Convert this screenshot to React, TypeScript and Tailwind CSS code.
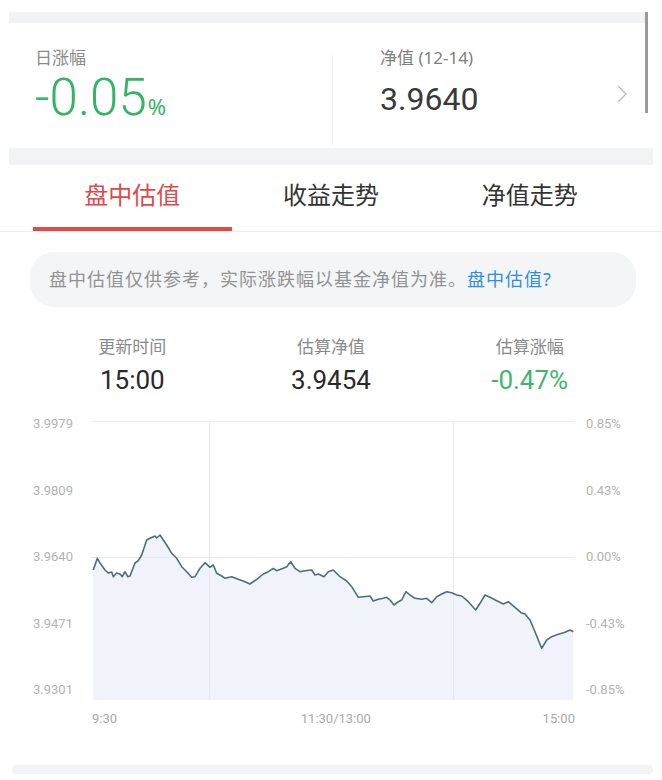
import React from 'react'

const sans = { fontFamily: '"Noto Sans", "Noto Sans CJK SC", sans-serif' }

// line of the intraday estimate, in page pixels (viewBox matches the plot box)
const pts: [number, number][] = [
  [93.3, 570], [97.3, 558.3], [100, 563], [105, 570], [108.3, 573], [111.7, 572], [113.3, 576.7], [116.7, 573],
  [120, 574], [122.3, 576.7], [125, 571.7], [127.7, 576.7], [130, 576], [135, 563], [138.3, 560.7], [141.7, 555],
  [146.7, 540], [150, 538.3], [155, 536], [156.7, 538], [160, 535], [163.3, 540], [166.7, 545], [171.7, 553.3],
  [176.7, 558.3], [181.7, 566.7], [186.7, 571.7], [191.7, 577.3], [195, 576.7], [200, 568.3], [205, 562.7],
  [210, 567.3], [213.3, 565], [216.7, 573.3], [221.7, 576], [225, 578.3], [231.7, 576.7], [238.3, 579.3],
  [245, 581.7], [250, 584], [256.7, 579.3], [263.3, 574], [268.3, 571.7], [273.3, 568.3], [276.7, 570.7],
  [283.3, 568.3], [286.7, 566.7], [290.7, 561.7], [295, 568.3], [300, 571.7], [305, 570.7], [311.7, 570],
  [315, 575], [318.3, 574], [324, 576.7], [328.3, 571.7], [333.3, 570], [340, 576.7], [346.7, 581], [351.7, 586.7],
  [358.3, 597.3], [363.3, 596.7], [370, 596], [373.3, 601], [378.3, 599.3], [383.3, 598.3], [386.7, 597.3],
  [390, 600], [394, 605], [398.3, 601.7], [401.7, 600], [406, 591.7], [410, 595], [415, 598.3], [421.7, 599.3],
  [426.7, 598.3], [431.7, 602.7], [436.7, 596.7], [441.7, 594], [446.7, 591.7], [451.7, 592.7], [456.7, 595],
  [461.7, 596], [468.3, 601.7], [475.7, 610], [480, 603.3], [485, 595], [490, 597.3], [496.7, 600.7],
  [503.3, 604], [508.3, 601.7], [515, 607.3], [521, 612.7], [525, 614], [530, 620], [535, 631.7], [539, 641.7],
  [541.7, 648.3], [546.7, 640], [551.7, 636.7], [558.3, 634.3], [565, 632.3], [570, 630], [573.3, 631.7],
]

const line = pts.map(p => p.join(',')).join(' ')
const area = `${line} 573.3,700 93.3,700`

const leftTicks = ['3.9979', '3.9809', '3.9640', '3.9471', '3.9301']
const rightTicks = ['0.85%', '0.43%', '0.00%', '-0.43%', '-0.85%']

const Band = ({ className = '' }: { className?: string }) => (
  <div className={'mx-[9px] bg-[#f2f3f5] ' + className}></div>
)

export default function App() {
  return (
    <div className="relative w-[662px] h-[780px] bg-white overflow-hidden" style={sans}>
      {/* scroll indicator */}
      <div className="absolute left-[645px] top-[12px] w-[3px] h-[101px] bg-[#9a9a9a]"></div>

      <div className="h-[12px]"></div>
      <Band className="h-[11px] mr-[17px]" />

      {/* daily change / nav card */}
      <div className="flex h-[125px]">
        <div className="w-[332px] pl-[35px] pt-[24px]">
          <div className="text-[17px] leading-[22px] text-[#8a8a8a]">日涨幅</div>
          <div className="mt-[4px] flex items-baseline text-[#33b565]">
            <span className="text-[51px] leading-[50px] font-light" style={{ fontFamily: 'Roboto, sans-serif' }}>-0.05</span>
            <span className="text-[22px] ml-[1px]">%</span>
          </div>
        </div>
        <div className="mt-[32px] w-px h-[90px] bg-[#f3f3f3]"></div>
        <div className="flex-1 flex items-start pl-[47px] pt-[24px]">
          <div className="flex-1">
            <div className="text-[17px] leading-[22px] text-[#808080]">净值 (12-14)</div>
            <div className="mt-[12px] text-[32px] leading-[36px] text-[#3a3a3a]" style={{ fontFamily: 'Roboto, sans-serif' }}>3.9640</div>
          </div>
          <svg width="12" height="18" viewBox="0 0 12 18" className="mt-[38px] mr-[34px]">
            <polyline points="2,1 10,9 2,17" fill="none" stroke="#bdbdbd" strokeWidth="1.4" />
          </svg>
        </div>
      </div>

      <Band className="h-[17px]" />

      {/* tabs */}
      <div className="grid grid-cols-3 px-[33px] h-[67px] border-b border-[#ececec]">
        <div className="flex justify-center pt-[14px] border-b-[4px] border-[#e24a48] text-[24px] leading-[32px] text-[#e0494a]">盘中估值</div>
        <div className="flex justify-center pt-[14px] text-[24px] leading-[32px] text-[#333]">收益走势</div>
        <div className="flex justify-center pt-[14px] text-[24px] leading-[32px] text-[#333]">净值走势</div>
      </div>

      {/* tip */}
      <div className="mt-[20px] ml-[30px] mr-[26px] h-[55px] rounded-[24px] bg-[#f4f5f7] flex items-center pl-[19px] text-[18px] tracking-[1px] text-[#929292]">
        盘中估值仅供参考，实际涨跌幅以基金净值为准。<span className="text-[#2f8fe6]">盘中估值?</span>
      </div>

      {/* stats */}
      <div className="grid grid-cols-3 px-[33px] mt-[28px]">
        {[
          ['更新时间', '15:00', 'text-[#2a2a2a]'],
          ['估算净值', '3.9454', 'text-[#2a2a2a]'],
          ['估算涨幅', '-0.47%', 'text-[#3fb66d]'],
        ].map(([k, v, c]) => (
          <div key={k} className="flex flex-col items-center">
            <div className="text-[17px] leading-[24px] text-[#8a8a8a]">{k}</div>
            <div className={'mt-[6px] text-[26px] leading-[30px] ' + c} style={{ fontFamily: 'Roboto, sans-serif' }}>{v}</div>
          </div>
        ))}
      </div>

      {/* chart */}
      <div className="flex mt-[22px] h-[283px] text-[13px] leading-[14px] text-[#b3b3b3]" style={{ fontFamily: 'Roboto, sans-serif' }}>
        <div className="w-[91px] pl-[33px] h-[280px] flex flex-col justify-between">
          {leftTicks.map(t => <div key={t}>{t}</div>)}
        </div>
        <svg width="483" height="279" viewBox="91 421 483 279" className="mt-[4px] block">
          <polygon points={area} fill="#f0f3f9" />
          <line x1="91" y1="421.5" x2="574" y2="421.5" stroke="#ededf1" />
          <line x1="91" y1="557.5" x2="574" y2="557.5" stroke="#e8e9ee" />
          <line x1="209.5" y1="421" x2="209.5" y2="700" stroke="#e8e9ee" />
          <line x1="453.5" y1="421" x2="453.5" y2="700" stroke="#e8e9ee" />
          <polyline points={line} fill="none" stroke="#4f6e78" strokeWidth="1.6" strokeLinejoin="round" />
        </svg>
        <div className="pl-[12px] h-[280px] flex flex-col justify-between">
          {rightTicks.map(t => <div key={t}>{t}</div>)}
        </div>
      </div>

      <div className="ml-[92px] w-[483px] mt-[11px] flex justify-between text-[13px] leading-[16px] text-[#aaaaaa]" style={{ fontFamily: 'Roboto, sans-serif' }}>
        <span>9:30</span>
        <span className="ml-[12px]">11:30/13:00</span>
        <span>15:00</span>
      </div>

      <Band className="mt-[38px] h-[9px] ml-[12px] rounded-sm" />
    </div>
  )
}
